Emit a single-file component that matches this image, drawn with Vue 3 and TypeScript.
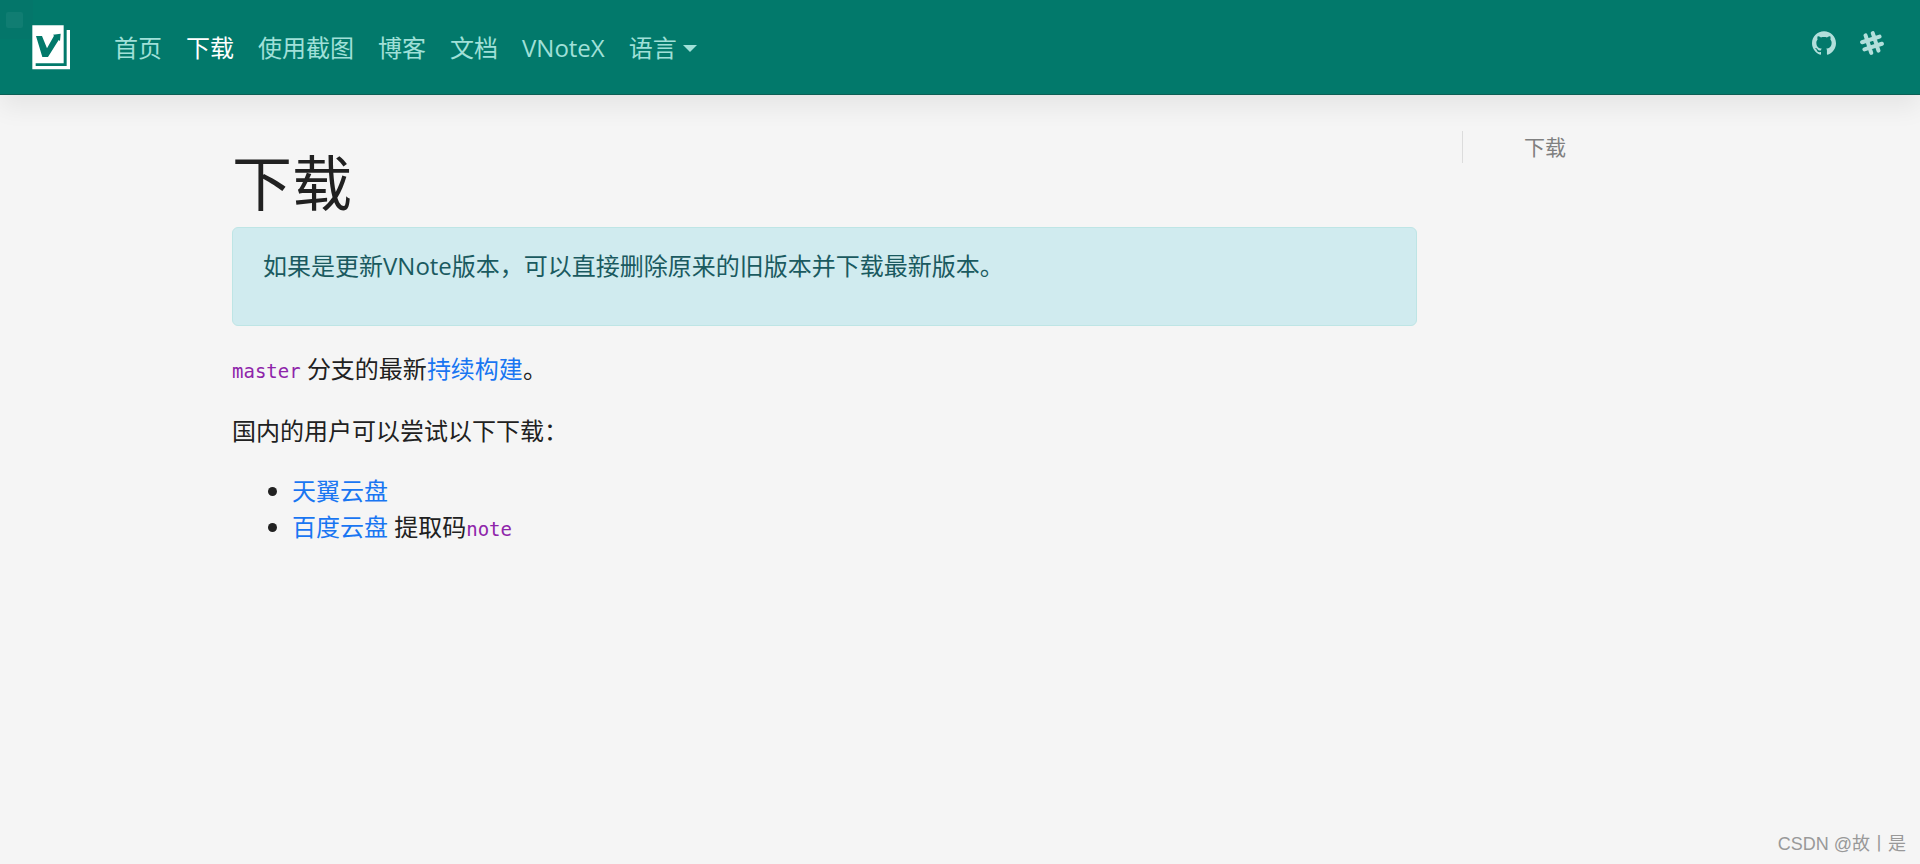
<script setup lang="ts">
interface NavItem {
  label: string
  href: string
  active?: boolean
}

const navItems: NavItem[] = [
  { label: '首页', href: '#home' },
  { label: '下载', href: '#download', active: true },
  { label: '使用截图', href: '#screenshots' },
  { label: '博客', href: '#blog' },
  { label: '文档', href: '#docs' },
  { label: 'VNoteX', href: '#vnotex' },
]
</script>

<template>
  <div class="page">
    <header class="navbar">
      <span class="corner" aria-hidden="true"><span class="corner-dot"></span></span>
      <a class="brand" href="#home" aria-label="VNote">
        <svg width="38" height="45" viewBox="0 0 114 135" aria-hidden="true">
          <path fill="#fff" d="M1 1h94v114H11v8h93V15h10v118H1z" />
          <path fill="#02796b" d="M12 33h18l15 37L64 36l2-4-3-3 23-3-2 22-4-3-32 51H31z" />
        </svg>
      </a>
      <nav class="links">
        <a
          v-for="item in navItems"
          :key="item.label"
          :href="item.href"
          class="link"
          :class="{ active: item.active }"
        >{{ item.label }}</a>
        <button type="button" class="link dropdown">语言<span class="caret"></span></button>
      </nav>
      <div class="social">
        <a href="#github" aria-label="GitHub">
          <svg width="24" height="24" viewBox="0 0 24 24" fill="currentColor" aria-hidden="true">
            <path d="M12 .297c-6.63 0-12 5.373-12 12 0 5.303 3.438 9.8 8.205 11.385.6.113.82-.258.82-.577 0-.285-.01-1.04-.015-2.04-3.338.724-4.042-1.61-4.042-1.61C4.422 18.07 3.633 17.7 3.633 17.7c-1.087-.744.084-.729.084-.729 1.205.084 1.838 1.236 1.838 1.236 1.07 1.835 2.809 1.305 3.495.998.108-.776.417-1.305.76-1.605-2.665-.3-5.466-1.332-5.466-5.93 0-1.31.465-2.38 1.235-3.22-.135-.303-.54-1.523.105-3.176 0 0 1.005-.322 3.3 1.23.96-.267 1.98-.399 3-.405 1.02.006 2.04.138 3 .405 2.28-1.552 3.285-1.23 3.285-1.23.645 1.653.24 2.873.12 3.176.765.84 1.23 1.91 1.23 3.22 0 4.61-2.805 5.625-5.475 5.92.42.36.81 1.096.81 2.22 0 1.606-.015 2.896-.015 3.286 0 .315.21.69.825.57C20.565 22.092 24 17.592 24 12.297c0-6.627-5.373-12-12-12" />
          </svg>
        </a>
        <a href="#slack" aria-label="Slack">
          <svg width="24" height="24" viewBox="0 0 24 24" aria-hidden="true">
            <g fill="none" stroke="currentColor" stroke-width="4" stroke-linecap="round" transform="rotate(-18 12 12)">
              <path d="M8.2 2.8v18.4M15.8 2.8v18.4M2.8 8.2h18.4M2.8 15.8h18.4" />
            </g>
          </svg>
        </a>
      </div>
    </header>

    <div class="container">
      <main class="content">
        <h1>下载</h1>
        <div class="alert" role="alert">
          <p>如果是更新VNote版本，可以直接删除原来的旧版本并下载最新版本。</p>
        </div>
        <p><code>master</code> 分支的最新<a href="#ci">持续构建</a>。</p>
        <p>国内的用户可以尝试以下下载：</p>
        <ul>
          <li><a href="#tianyi">天翼云盘</a></li>
          <li><a href="#baidu">百度云盘</a> 提取码<code>note</code></li>
        </ul>
      </main>
      <aside class="toc">
        <a href="#download">下载</a>
      </aside>
    </div>

    <div class="watermark">CSDN @故丨是</div>
  </div>
</template>

<style>
body {
  margin: 0;
  background: #f5f5f5;
}
</style>

<style scoped>
.page {
  position: relative;
  min-height: 100vh;
  color: #212121;
  font-family: "Open Sans", "Noto Sans CJK SC", sans-serif;
  font-size: 24px;
  line-height: 36px;
}

a {
  color: #1976f2;
  text-decoration: none;
}

.navbar {
  position: relative;
  display: flex;
  align-items: center;
  box-sizing: border-box;
  height: 95px;
  padding: 0 36px 0 32px;
  background: #02796b;
  border-bottom: 1px solid #0c5f55;
  box-shadow: 0 12px 24px rgba(0, 0, 0, 0.065);
}

.corner {
  position: absolute;
  top: 0;
  left: 0;
  width: 33px;
  height: 39px;
  background: #04766a;
}

.corner-dot {
  position: absolute;
  top: 12px;
  left: 6px;
  width: 17px;
  height: 16px;
  border-radius: 2px;
  background: #107d72;
}

.brand {
  position: relative;
  display: flex;
}

.links {
  display: flex;
  gap: 24px;
  margin-left: 44px;
  padding-top: 2px;
}

.link {
  color: #a0e0d8;
}

.link.active {
  color: #fff;
}

.dropdown {
  display: flex;
  align-items: center;
  gap: 6px;
  padding: 0;
  border: 0;
  background: none;
  font: inherit;
  cursor: pointer;
}

.caret {
  border-top: 7px solid currentColor;
  border-right: 7px solid transparent;
  border-left: 7px solid transparent;
}

.social {
  display: flex;
  gap: 24px;
  margin-left: auto;
  padding-bottom: 8px;
}

.social a {
  display: flex;
  color: #b2dfdb;
}

.container {
  display: flex;
  gap: 45px;
  box-sizing: border-box;
  max-width: 1504px;
  margin: 0 auto;
  padding: 36px 24px 0;
}

.content {
  flex: 1;
  min-width: 0;
}

h1 {
  margin: 16px 0 8px;
  font-size: 60px;
  font-weight: 400;
  line-height: 72px;
}

p {
  margin: 0 0 24px;
}

.alert {
  margin-bottom: 25px;
  padding: 20px 30px 17px;
  border: 1px solid #bee5e5;
  border-radius: 6px;
  background: #d0ebef;
  color: #1a5a60;
}

ul {
  margin: 0;
  padding-left: 60px;
}

code {
  color: #8e24aa;
  font-family: "DejaVu Sans Mono", monospace;
  font-size: 19px;
}

.toc {
  flex: 0 0 226px;
  align-self: flex-start;
  box-sizing: border-box;
  padding-left: 61px;
  border-left: 1px solid #dcdcdc;
  font-size: 21px;
  line-height: 32px;
}

.toc a {
  color: #808080;
}

.watermark {
  position: absolute;
  right: 14px;
  bottom: 6px;
  color: #999;
  font-family: "Liberation Sans", "Noto Sans CJK SC", sans-serif;
  font-size: 18px;
  line-height: 27px;
}
</style>
